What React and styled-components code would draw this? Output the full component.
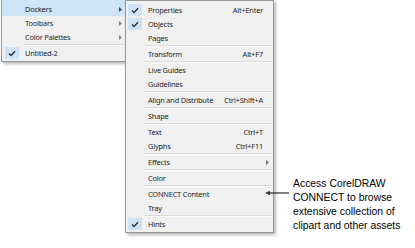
import React from "react";
import styled, { createGlobalStyle } from "styled-components";

const Global = createGlobalStyle`
  html, body { margin: 0; padding: 0; background: #ffffff; }
  body { width: 415px; height: 248px; overflow: hidden; }
`;

const Stage = styled.div`
  position: relative;
  display: flex;
  align-items: flex-start;
  width: 415px;
  height: 248px;
  font-family: "Noto Sans", "Open Sans", sans-serif;
`;

const Menu = styled.div`
  position: relative;
  z-index: ${(p) => p.$z || 1};
  width: ${(p) => p.$w}px;
  margin-left: ${(p) => p.$ml || 0}px;
  margin-top: ${(p) => p.$mt || 0}px;
  background: #f0f0f0;
  border: 1px solid #979797;
  padding: ${(p) => p.$pad || "1px 1px"};
  box-shadow: 2px 2px 3px rgba(0, 0, 0, 0.28);
  box-sizing: border-box;
  display: flex;
  flex-direction: column;
`;

const Item = styled.div`
  display: grid;
  grid-template-columns: ${(p) => p.$gutter}px 1fr auto 9px;
  align-items: center;
  height: ${(p) => (p.$tall ? 16 : 14)}px;
  padding-top: ${(p) => (p.$tall ? 2 : 0)}px;
  box-sizing: border-box;
  background: ${(p) => (p.$active ? "#cce3f8" : "transparent")};
  color: #1e1e1e;
  font-size: 7.4px;
  letter-spacing: -0.2px;
  line-height: 14px;
  white-space: nowrap;
`;

const Gutter = styled.div`
  display: flex;
  align-items: center;
  padding-left: ${(p) => p.$pl || 0}px;
  height: 14px;
`;

const CheckBox = styled.span`
  width: 14px;
  height: 12px;
  background: #cce3f8;
  display: flex;
  align-items: center;
  justify-content: center;
`;

const Label = styled.span``;

const Shortcut = styled.span`
  text-align: right;
`;

const Arrow = styled.span`
  display: flex;
  justify-content: center;
  align-items: center;
  svg { display: block; }
`;

const Sep = styled.div`
  height: 2px;
  margin-left: ${(p) => p.$ml}px;
  border-top: 1px solid #d9d9d9;
  border-bottom: 1px solid #fbfbfb;
  box-sizing: border-box;
`;

const Note = styled.div`
  margin-left: 19px;
  margin-top: 177px;
  font-family: "Liberation Sans", Arial, sans-serif;
  font-size: 10.4px;
  line-height: 14px;
  color: #000;
`;

const Pointer = styled.div`
  position: absolute;
  left: 265px;
  top: 190px;
  width: 24px;
  height: 6px;
  z-index: 5;
  svg { display: block; }
`;

const Check = () => (
  <svg width="8" height="7" viewBox="0 0 8 7">
    <path d="M1 3.6 L3 5.6 L7 1.2" fill="none" stroke="#2a2a2a" strokeWidth="1.4" />
  </svg>
);

const Tri = ({ c = "#666" }) => (
  <svg width="3" height="5" viewBox="0 0 3 5">
    <path d="M0 0 L3 2.5 L0 5 Z" fill={c} />
  </svg>
);

const leftItems = [
  { label: "Dockers", sub: true, active: true },
  { label: "Toolbars", sub: true },
  { label: "Color Palettes", sub: true },
  { sep: true },
  { label: "Untitled-2", check: true },
];

const rightItems = [
  { label: "Properties", check: true, sc: "Alt+Enter" },
  { label: "Objects", check: true },
  { label: "Pages" },
  { sep: true },
  { label: "Transform", sc: "Alt+F7" },
  { sep: true },
  { label: "Live Guides" },
  { label: "Guidelines" },
  { sep: true },
  { label: "Align and Distribute", sc: "Ctrl+Shift+A" },
  { sep: true },
  { label: "Shape" },
  { sep: true },
  { label: "Text", sc: "Ctrl+T" },
  { label: "Glyphs", sc: "Ctrl+F11" },
  { sep: true },
  { label: "Effects", sub: true },
  { sep: true },
  { label: "Color" },
  { sep: true },
  { label: "CONNECT Content" },
  { label: "Tray" },
  { sep: true },
  { label: "Hints", check: true },
];

export default function App() {
  return (
    <>
      <Global />
      <Stage>
        <Menu $w={126} $ml={1} $mt={-1} $pad="0 1px 1px 0" $z={1}>
          {leftItems.map((it, i) =>
            it.sep ? (
              <Sep key={i} $ml={22} />
            ) : (
              <Item key={i} $gutter={23} $active={it.active} $tall={i === 0}>
                <Gutter $pl={3}>{it.check && <CheckBox><Check /></CheckBox>}</Gutter>
                <Label>{it.label}</Label>
                <Shortcut />
                <Arrow>{it.sub && <Tri c={it.active ? "#444" : "#888"} />}</Arrow>
              </Item>
            )
          )}
        </Menu>
        <Menu $w={149} $ml={-2} $mt={0} $pad="2px 1px 1px 1px" $z={2}>
          {rightItems.map((it, i) =>
            it.sep ? (
              <Sep key={i} $ml={17} />
            ) : (
              <Item key={i} $gutter={21}>
                <Gutter $pl={1}>{it.check && <CheckBox><Check /></CheckBox>}</Gutter>
                <Label>{it.label}</Label>
                <Shortcut>{it.sc}</Shortcut>
                <Arrow>{it.sub && <Tri c="#777" />}</Arrow>
              </Item>
            )
          )}
        </Menu>
        <Note>
          Access CorelDRAW
          <br />
          CONNECT to browse
          <br />
          extensive collection of
          <br />
          clipart and other assets
        </Note>
        <Pointer>
          <svg width="24" height="6" viewBox="0 0 24 6">
            <path d="M3 3 H24" stroke="#000" strokeWidth="1" />
            <path d="M0 3 L5 0.8 L5 5.2 Z" fill="#333" />
          </svg>
        </Pointer>
      </Stage>
    </>
  );
}
